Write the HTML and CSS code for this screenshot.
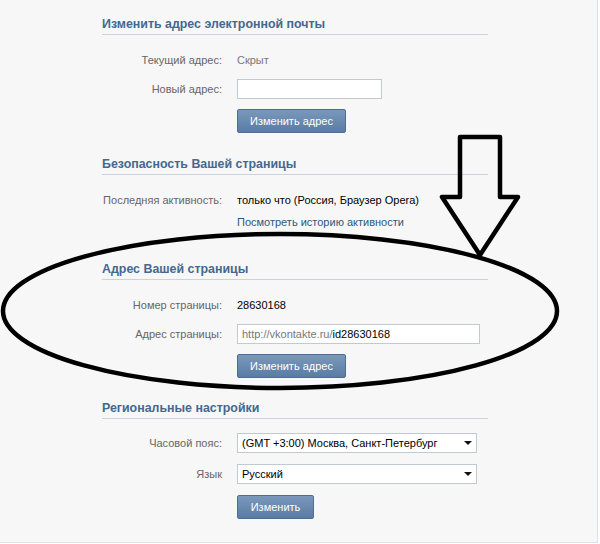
FILE: index.html
```html
<!DOCTYPE html>
<html lang="ru">
<head>
<meta charset="utf-8">
<title>Настройки</title>
<link rel="stylesheet" href="styles.css">
</head>
<body>
<div class="page">
  <section class="block">
    <h2 class="block-title">Изменить адрес электронной почты</h2>
    <div class="rows">
      <div class="row"><div class="label">Текущий адрес:</div><div class="value muted">Скрыт</div></div>
      <div class="row"><div class="label">Новый адрес:</div><div class="value"><div class="field field-short"></div></div></div>
      <div class="row"><div class="label"></div><div class="value"><button class="btn btn-wide">Изменить адрес</button></div></div>
    </div>
  </section>

  <section class="block">
    <h2 class="block-title">Безопасность Вашей страницы</h2>
    <div class="rows">
      <div class="row row-top"><div class="label">Последняя активность:</div>
        <div class="value">
          <div class="strong">только что (Россия, Браузер Opera)</div>
          <a class="link" href="#">Посмотреть историю активности</a>
        </div>
      </div>
    </div>
  </section>

  <section class="block block-after-link">
    <h2 class="block-title">Адрес Вашей страницы</h2>
    <div class="rows">
      <div class="row"><div class="label">Номер страницы:</div><div class="value strong">28630168</div></div>
      <div class="row"><div class="label">Адрес страницы:</div><div class="value"><div class="field field-long"><span class="prefix">http://vkontakte.ru/</span>id28630168</div></div></div>
      <div class="row"><div class="label"></div><div class="value"><button class="btn btn-wide">Изменить адрес</button></div></div>
    </div>
  </section>

  <section class="block block-last">
    <h2 class="block-title">Региональные настройки</h2>
    <div class="rows rows-controls">
      <div class="row"><div class="label">Часовой пояс:</div><div class="value"><div class="select"><span>(GMT +3:00) Москва, Санкт-Петербург</span><i class="caret"></i></div></div></div>
      <div class="row"><div class="label">Язык</div><div class="value"><div class="select"><span>Русский</span><i class="caret"></i></div></div></div>
      <div class="row"><div class="label"></div><div class="value"><button class="btn btn-narrow">Изменить</button></div></div>
    </div>
  </section>

  <svg class="annotation" width="600" height="544" viewBox="0 0 600 544">
    <ellipse cx="280" cy="311" rx="277" ry="77" fill="none" stroke="#000" stroke-width="4.5"/>
    <path d="M460 137 L500 137 L500 197 L518 197 L480 255 L442 197 L460 197 Z" fill="none" stroke="#000" stroke-width="4.5" stroke-linejoin="round"/>
  </svg>
</div>
</body>
</html>
```
FILE: styles.css
```css
* { box-sizing: border-box; }
html, body { margin: 0; padding: 0; background: #fff; }
body {
  font-family: "Liberation Sans", Arial, sans-serif;
  font-size: 11px;
  color: #000;
}
.page {
  position: relative;
  display: flex;
  flex-direction: column;
  width: 598px;
  height: 543px;
  background: #f7f7f7;
  border-right: 1px solid #dde2ea;
  border-bottom: 1px solid #dde2ea;
  padding-top: 16px;
  overflow: hidden;
}
.block {
  width: 386px;
  margin-left: 102px;
  margin-bottom: 23px;
}
.block-after-link { margin-top: 8px; }
.block-last { margin-top: -1px; }
.block-title {
  margin: 0;
  font-size: 12.4px;
  font-weight: bold;
  line-height: 16px;
  color: #45688e;
  padding-bottom: 2px;
  border-bottom: 1px solid #c9d3df;
}
.rows {
  display: flex;
  flex-direction: column;
  gap: 10px;
  padding-top: 16px;
}
.rows-controls {
  padding-top: 14px;
  gap: 11px;
}
.row {
  display: grid;
  grid-template-columns: 120px 1fr;
  column-gap: 15px;
  align-items: center;
  min-height: 18px;
  line-height: 18px;
}
.row-top { align-items: start; }
.label {
  text-align: right;
  color: #666;
  white-space: nowrap;
}
.muted { color: #777; }
.strong { color: #000; }
.link {
  display: block;
  margin-top: 5px;
  color: #2b587a;
  text-decoration: none;
  line-height: 16px;
}
.field {
  height: 20px;
  background: #fff;
  border: 1px solid #c0cad5;
  padding: 0 4px;
  line-height: 18px;
  color: #000;
  white-space: nowrap;
}
.field-short { width: 145px; }
.field-long { width: 243px; }
.prefix { color: #777; }
.select {
  position: relative;
  width: 240px;
  height: 20px;
  background: #fff;
  border: 1px solid #c0cad5;
  padding: 0 4px;
  line-height: 18px;
  color: #000;
  white-space: nowrap;
}
.caret {
  position: absolute;
  right: 4px;
  top: 7px;
  width: 0;
  height: 0;
  border-left: 4px solid transparent;
  border-right: 4px solid transparent;
  border-top: 4px solid #111;
}
.btn {
  display: block;
  height: 24px;
  padding: 0;
  font-family: inherit;
  font-size: 11px;
  color: #fff;
  background: linear-gradient(#7a98bc, #5a7ca3);
  border: 1px solid #4d6d93;
  border-radius: 2px;
  cursor: pointer;
}
.btn-wide { width: 109px; }
.btn-narrow { width: 77px; }
.annotation {
  position: absolute;
  left: 0;
  top: 0;
  pointer-events: none;
}
```
